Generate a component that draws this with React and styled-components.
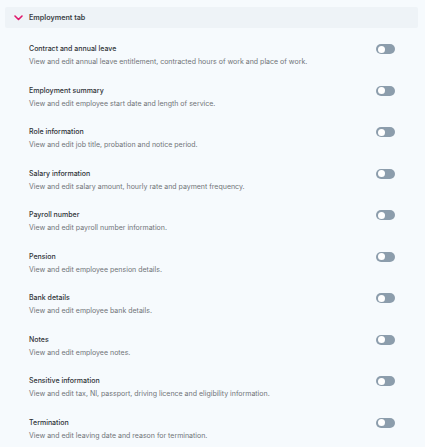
import React from 'react';
import styled, { createGlobalStyle } from 'styled-components';

const GlobalStyle = createGlobalStyle`
  html, body {
    margin: 0;
    padding: 0;
    background: #f6fafd;
  }
  body {
    font-family: Inter, "Noto Sans", sans-serif;
    -webkit-font-smoothing: antialiased;
  }
`;

const SECTIONS = [
  ['Contract and annual leave', 'View and edit annual leave entitlement, contracted hours of work and place of work.'],
  ['Employment summary', 'View and edit employee start date and length of service.'],
  ['Role information', 'View and edit job title, probation and notice period.'],
  ['Salary information', 'View and edit salary amount, hourly rate and payment frequency.'],
  ['Payroll number', 'View and edit payroll number information.'],
  ['Pension', 'View and edit employee pension details.'],
  ['Bank details', 'View and edit employee bank details.'],
  ['Notes', 'View and edit employee notes.'],
  ['Sensitive information', 'View and edit tax, NI, passport, driving licence and eligibility information.'],
  ['Termination', 'View and edit leaving date and reason for termination.'],
];

const Toggle = ({ on }) => (
  <Switch $on={on}>
    <Knob $on={on} />
  </Switch>
);

const App = () => (
  <>
    <GlobalStyle />
    <Page>
      <Header>
        <Chevron width="9" height="6" viewBox="0 0 9 6">
          <path d="M1 1l3.5 3.5L8 1" fill="none" stroke="#e0186c" strokeWidth="1.6" strokeLinecap="round" strokeLinejoin="round" />
        </Chevron>
        <HeaderTitle>Employment tab</HeaderTitle>
      </Header>
      <List>
        {SECTIONS.map(([title, desc]) => (
          <Row key={title}>
            <Text>
              <Title>{title}</Title>
              <Desc>{desc}</Desc>
            </Text>
            <Toggle on={false} />
          </Row>
        ))}
      </List>
    </Page>
  </>
);

const Page = styled.div`
  padding: 7px 7px 0 5px;
`;

const Header = styled.div`
  display: flex;
  align-items: center;
  height: 21px;
  padding-left: 9px;
  background: #eef3f7;
  border-radius: 2px;
`;

const Chevron = styled.svg`
  display: block;
  margin-right: 6px;
  margin-top: 1px;
`;

const HeaderTitle = styled.span`
  font-size: 7.2px;
  font-weight: 600;
  color: #3a3f45;
`;

const List = styled.div`
  display: flex;
  flex-direction: column;
  gap: 16.5px;
  padding: 15px 23px 0 24px;
`;

const Row = styled.div`
  display: flex;
  justify-content: space-between;
  align-items: flex-start;
`;

const Text = styled.div`
  display: flex;
  flex-direction: column;
  gap: 1px;
`;

const Title = styled.div`
  font-size: 7px;
  line-height: 12px;
  font-weight: 500;
  color: #2f3337;
`;

const Desc = styled.div`
  font-size: 7px;
  line-height: 12px;
  color: #707478;
`;

const Switch = styled.div`
  position: relative;
  width: 19px;
  height: 10px;
  margin-top: 1px;
  border-radius: 5px;
  background: ${p => (p.$on ? '#e0186c' : '#8c9dac')};
`;

const Knob = styled.div`
  position: absolute;
  top: 1.5px;
  left: ${p => (p.$on ? '10.5px' : '1.5px')};
  width: 7px;
  height: 7px;
  border-radius: 50%;
  background: #ffffff;
`;

export default App;
